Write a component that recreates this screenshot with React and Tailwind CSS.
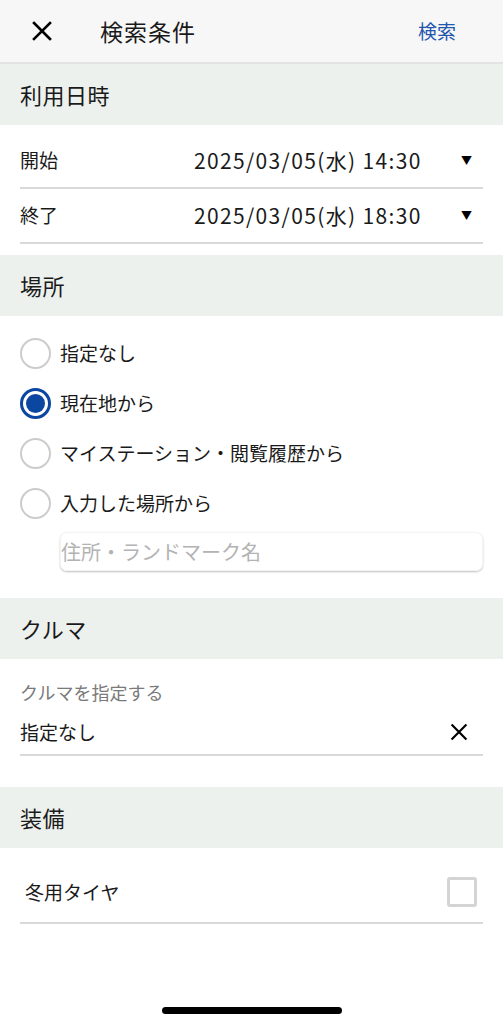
import React, { useState } from 'react';

const jp = { fontFamily: '"Noto Sans CJK JP", "Noto Sans", sans-serif' };

function CloseIcon({ className }) {
    return (
        <svg viewBox="0 0 24 24" className={className} fill="none" stroke="currentColor" strokeWidth="2.6" strokeLinecap="square">
            <path d="M4 4 L20 20 M20 4 L4 20" />
        </svg>
    );
}

function SectionHeader({ children }) {
    return (
        <div className="h-[61px] bg-[#edf1ee] flex items-center px-[20px] text-[22px] tracking-[0.5px] text-[#1a1a1a]">
            {children}
        </div>
    );
}

function DateRow({ label, value }) {
    return (
        <div className="h-[55px] mx-[20px] border-b-2 border-[#d9d9d9] flex items-center">
            <span className="w-[174px] text-[19px] text-[#1a1a1a]">{label}</span>
            <span className="flex-1 text-[21px] tracking-[1.35px] text-[#1a1a1a]">{value}</span>
            <span className="text-[11px] text-black mr-[11px]">▼</span>
        </div>
    );
}

function Radio({ label, checked, onClick }) {
    return (
        <div className="h-[50px] flex items-center px-[20px] cursor-pointer" onClick={onClick}>
            {checked ? (
                <span className="w-[31px] h-[31px] rounded-full border-[3px] border-[#0b46a0] flex items-center justify-center">
                    <span className="w-[19px] h-[19px] rounded-full bg-[#0b46a0]" />
                </span>
            ) : (
                <span className="w-[31px] h-[31px] rounded-full border-2 border-[#cccccc]" />
            )}
            <span className="ml-[9px] text-[19px] text-[#1a1a1a]">{label}</span>
        </div>
    );
}

export default function App() {
    const [place, setPlace] = useState(1);
    const [winter, setWinter] = useState(false);
    const places = ['指定なし', '現在地から', 'マイステーション・閲覧履歴から', '入力した場所から'];

    return (
        <div className="relative w-full h-[1024px] bg-white overflow-hidden" style={jp}>
            <header className="h-[64px] bg-[#f7f7f7] border-b-2 border-[#e3e3e3] flex items-center">
                <CloseIcon className="w-[24px] h-[24px] ml-[30px] text-black" />
                <h1 className="ml-[46px] text-[23px] tracking-[1px] text-[#1a1a1a]">検索条件</h1>
                <button className="ml-auto mr-[47px] text-[19px] text-[#2356ad]">検索</button>
            </header>

            <SectionHeader>利用日時</SectionHeader>
            <div className="pt-[9px] pb-[11px]">
                <DateRow label="開始" value="2025/03/05(水) 14:30" />
                <DateRow label="終了" value="2025/03/05(水) 18:30" />
            </div>

            <SectionHeader>場所</SectionHeader>
            <div className="pt-[12px] pb-[27px]">
                {places.map((p, i) => (
                    <Radio key={p} label={p} checked={place === i} onClick={() => setPlace(i)} />
                ))}
                <div className="ml-[60px] mr-[20px] mt-[4px] h-[39px] rounded-[7px] border border-[#f4f4f4] shadow-[0_1px_2px_rgba(0,0,0,0.25)] flex items-center">
                    <input
                        className="w-full bg-transparent outline-none text-[20px] placeholder-[#b3b3b3]"
                        placeholder="住所・ランドマーク名"
                    />
                </div>
            </div>

            <SectionHeader>クルマ</SectionHeader>
            <div className="pt-[21px] pb-[31px] px-[20px]">
                <div className="h-[24px] flex items-center text-[18px] text-[#7a7a7a]">クルマを指定する</div>
                <div className="mt-[6px] h-[46px] border-b-2 border-[#d9d9d9] flex items-center">
                    <span className="flex-1 text-[19px] text-[#1a1a1a]">指定なし</span>
                    <CloseIcon className="w-[20px] h-[20px] mr-[14px] text-black" />
                </div>
            </div>

            <SectionHeader>装備</SectionHeader>
            <div className="pt-[15px] px-[20px]">
                <div className="h-[61px] border-b-2 border-[#d9d9d9] flex items-center">
                    <span className="flex-1 ml-[5px] text-[19px] text-[#1a1a1a]">冬用タイヤ</span>
                    <button
                        onClick={() => setWinter(!winter)}
                        className="w-[30px] h-[30px] mr-[6px] mb-[2px] rounded-[3px] border-[3px] border-[#d4d4d4] bg-white"
                    />
                </div>
            </div>

            <div className="absolute bottom-[10px] left-[162px] w-[180px] h-[7px] rounded-full bg-black" />
        </div>
    );
}
